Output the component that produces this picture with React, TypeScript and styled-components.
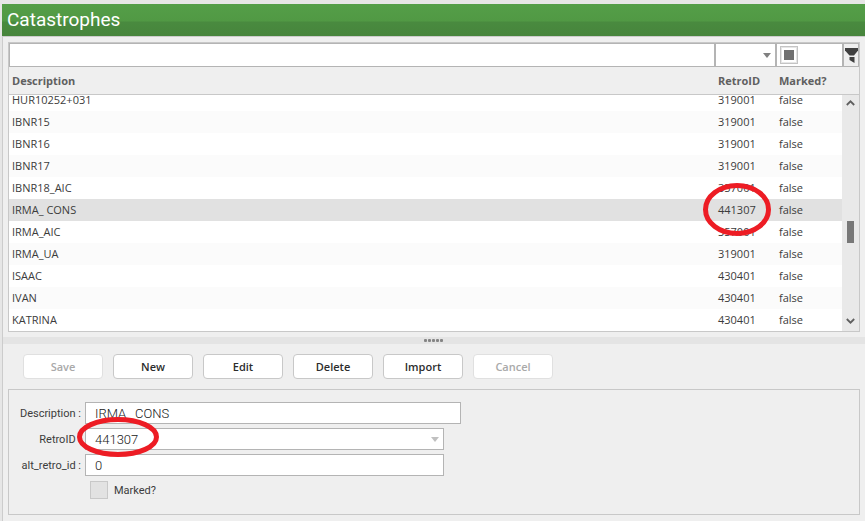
import React from "react";
import styled, { createGlobalStyle } from "styled-components";

const GlobalStyle = createGlobalStyle`
  * { box-sizing: border-box; }
  body { margin: 0; background: #efefef; }
  button, input, select { margin: 0; border-radius: 0; font: inherit; }
`;

const gridFont = `"Open Sans", "Noto Sans", sans-serif`;
const formFont = `Roboto, sans-serif`;

const Page = styled.div`
  display: flex;
  flex-direction: column;
  min-height: 100vh;
  padding: 4px 0 0 2px;
  background: #e6e6e6;
  color: #3c3c3c;
`;

const TitleBar = styled.header`
  display: flex;
  align-items: center;
  height: 32px;
  padding: 0 5px;
  background: linear-gradient(#549e48 0, #519944 17px, #498a3f 18px, #47853c 100%);
`;

const Title = styled.h1`
  margin: 0;
  font: 400 19px/32px ${formFont};
  color: #fff;
`;

const Body = styled.main`
  flex: 1;
  display: flex;
  flex-direction: column;
  border: 1px solid #ccc;
  border-width: 1px 0 0 1px;
  background: #efefef;
`;

const ListPane = styled.section`
  flex: 1;
  display: flex;
  flex-direction: column;
  margin: 5px 5px 5px;
  border: 1px solid #c8c8c8;
`;

const FilterBar = styled.div`
  display: grid;
  grid-template-columns: minmax(0, 1fr) 61px 67px 17px;
  height: 24px;
`;

const FilterCell = styled.div`
  position: relative;
  display: flex;
  align-items: center;
  border: 1px solid #b4b4b4;
  border-left-width: 2px;
  border-right-width: 0;
  background: #fff;

  &:first-child { border-left-width: 1px; }
`;

const FilterInput = styled.input`
  width: 100%;
  height: 100%;
  padding: 0 4px;
  border: 0;
  outline: 0;
  background: transparent;
  font: 11px ${gridFont};
`;

const FilterSelect = styled.select`
  width: 100%;
  height: 100%;
  padding: 0 4px;
  border: 0;
  appearance: none;
  background: transparent;
  font: 11px ${gridFont};
`;

const Caret = styled.svg<{ $right: number }>`
  position: absolute;
  top: calc(50% - 2px);
  right: ${(p) => p.$right}px;
  pointer-events: none;
`;

const TriState = styled.input`
  width: 18px;
  height: 18px;
  margin-left: 3px;
  border: 1px solid #c4c4c4;
  appearance: none;
  background: #fff;

  &:indeterminate {
    background: linear-gradient(#707070, #707070) center / 10px 10px no-repeat #fff;
    box-shadow: inset 0 0 0 1px #e6e6e6;
  }
`;

const FunnelButton = styled.button`
  display: flex;
  align-items: center;
  justify-content: center;
  padding: 0;
  overflow: hidden;
  border: 1px solid #b4b4b4;
  border-left-width: 2px;
  border-right-width: 1px;
  background: #efefef;
`;

const ListArea = styled.div`
  flex: 1;
  display: flex;
  min-height: 264px;
`;

const Table = styled.table`
  flex: 1;
  display: flex;
  flex-direction: column;
  min-width: 0;
  font-family: ${gridFont};
  font-size: 11px;
`;

const Head = styled.thead`
  display: block;
  height: 28px;
  border-bottom: 1px solid #c8c8c8;
`;

const Rows = styled.tbody`
  flex: 1 0 0;
  display: flex;
  flex-direction: column;
  justify-content: flex-end;
  overflow: hidden;
  background: #fff;
`;

const Row = styled.tr<{ $selected?: boolean }>`
  flex: none;
  display: grid;
  grid-template-columns: minmax(0, 1fr) 61px 66px;
  line-height: 22px;
  background: ${(p) => (p.$selected ? "#e1e1e1" : "#fff")};

  &:nth-child(even) { background: ${(p) => (p.$selected ? "#e1e1e1" : "#fbfbfb")}; }
`;

const HeadRow = styled.tr`
  display: grid;
  grid-template-columns: minmax(0, 1fr) 61px 66px;
  line-height: 27px;
`;

const HeadCell = styled.th`
  padding: 0 3px;
  text-align: left;
  font-weight: 700;
  color: #606060;
`;

const Cell = styled.td`
  position: relative;
  padding: 0 3px;
  white-space: nowrap;
`;

const ScrollColumn = styled.div`
  display: flex;
  flex-direction: column;
  width: 17px;
`;

const ScrollHead = styled.div`
  height: 28px;
  border-bottom: 1px solid #c8c8c8;
`;

const ScrollTrack = styled.div`
  flex: 1;
  display: flex;
  flex-direction: column;
  align-items: center;
  padding-bottom: 2px;
  background: #e9e9e9;
`;

const ScrollButton = styled.button`
  display: flex;
  align-items: center;
  justify-content: center;
  width: 17px;
  height: 16px;
  padding: 0;
  border: 0;
  background: transparent;
`;

const ScrollSpace = styled.div<{ $grow: number }>`
  flex: ${(p) => p.$grow} 0 0;
`;

const ScrollThumb = styled.div`
  width: 7px;
  height: 22px;
  background: #787878;
`;

const Splitter = styled.div`
  display: flex;
  align-items: center;
  justify-content: center;
  height: 7px;
  background: #e4e4e4;
`;

const Toolbar = styled.div`
  display: flex;
  gap: 10px;
  padding: 10px 20px;
`;

const ActionButton = styled.button`
  width: 80px;
  height: 25px;
  padding: 0;
  border: 1px solid #c8c8c8;
  border-radius: 4px;
  background: #fff;
  font: 600 11px/22px ${gridFont};
  color: #2c2c2c;

  &:disabled { border-color: #e0e0e0; color: #a9a9a9; }
`;

const Form = styled.form`
  display: flex;
  flex-direction: column;
  gap: 4px;
  margin: 0 5px 6px;
  padding: 12px 0 15px;
  border: 1px solid #c8c8c8;
  font-family: ${formFont};
`;

const Field = styled.div`
  display: grid;
  grid-template-columns: 72px minmax(0, 1fr);
  column-gap: 4px;
  align-items: center;
`;

const Label = styled.label`
  text-align: right;
  white-space: nowrap;
  font-size: 11px;
`;

const Control = styled.div<{ $width: number }>`
  position: relative;
  display: flex;
  width: 100%;
  max-width: ${(p) => p.$width}px;
  height: 22px;
  border: 1px solid #b4b4b4;
  background: #fff;
`;

const TextBox = styled.input`
  width: 100%;
  padding: 0 9px;
  border: 0;
  outline: 0;
  background: transparent;
  font: 300 13px ${formFont};
  color: #202020;
`;

const DropDown = styled.select`
  width: 100%;
  padding: 0 9px;
  border: 0;
  outline: 0;
  appearance: none;
  background: transparent;
  font: 300 13px ${formFont};
  color: #202020;
`;

const CheckLine = styled.label`
  display: flex;
  align-items: center;
  gap: 6px;
  margin: 1px 0 0 81px;
  font-size: 11px;
`;

const CheckBox = styled.input`
  width: 18px;
  height: 18px;
  border: 1px solid #c8c8c8;
  appearance: none;
  background: #e2e2e2;
`;

const RingShape = styled.svg<{ $left: number; $top: number }>`
  position: absolute;
  z-index: 1;
  left: ${(p) => p.$left}px;
  top: ${(p) => p.$top}px;
  pointer-events: none;
`;

type RingProps = { left: number; top: number; width: number; height: number };

const Ring = ({ left, top, width, height }: RingProps) => (
  <RingShape $left={left} $top={top} width={width} height={height} aria-hidden="true">
    <ellipse
      cx={width / 2}
      cy={height / 2}
      rx={width / 2 - 2.5}
      ry={height / 2 - 2.5}
      fill="none"
      stroke="#ed1c24"
      strokeWidth="5"
    />
  </RingShape>
);

const CaretIcon = ({ color, right }: { color: string; right: number }) => (
  <Caret $right={right} width="8" height="5" viewBox="0 0 8 5" aria-hidden="true">
    <path d="M0 0h8L4 5z" fill={color} />
  </Caret>
);

const Chevron = ({ up }: { up?: boolean }) => (
  <svg width="9" height="6" viewBox="0 0 9 6" aria-hidden="true">
    <path d={up ? "M.8 5 4.5 1.3 8.2 5" : "M.8 1 4.5 4.7 8.2 1"} fill="none" stroke="#606060" strokeWidth="1.8" />
  </svg>
);

const rows = [
  ["HUR10252+031", "319001"],
  ["IBNR15", "319001"],
  ["IBNR16", "319001"],
  ["IBNR17", "319001"],
  ["IBNR18_AIC", "357001"],
  ["IRMA_ CONS", "441307"],
  ["IRMA_AIC", "357001"],
  ["IRMA_UA", "319001"],
  ["ISAAC", "430401"],
  ["IVAN", "430401"],
  ["KATRINA", "430401"],
];
const selectedIndex = 5;

const actions = [
  { name: "Save", disabled: true },
  { name: "New", disabled: false },
  { name: "Edit", disabled: false },
  { name: "Delete", disabled: false },
  { name: "Import", disabled: false },
  { name: "Cancel", disabled: true },
];

export default function App() {
  return (
    <Page>
      <GlobalStyle />
      <TitleBar>
        <Title>Catastrophes</Title>
      </TitleBar>
      <Body>
        <ListPane>
          <FilterBar>
            <FilterCell>
              <FilterInput aria-label="Filter by description" />
            </FilterCell>
            <FilterCell>
              <FilterSelect aria-label="Filter by RetroID">
                <option />
              </FilterSelect>
              <CaretIcon color="#808080" right={4} />
            </FilterCell>
            <FilterCell>
              <TriState
                type="checkbox"
                aria-label="Filter by marked"
                ref={(el) => {
                  if (el) el.indeterminate = true;
                }}
              />
            </FilterCell>
            <FunnelButton type="button" aria-label="Apply filter">
              <svg width="13" height="15" viewBox="0 0 13 15" aria-hidden="true">
                <path d="M0 0h13v2.500L9 7.500H4.500L0 2.500z" fill="#404040" />
                <path d="M4.500 9h5v6L4.500 12z" fill="#404040" />
              </svg>
            </FunnelButton>
          </FilterBar>
          <ListArea>
            <Table>
              <Head>
                <HeadRow>
                  <HeadCell scope="col">Description</HeadCell>
                  <HeadCell scope="col">RetroID</HeadCell>
                  <HeadCell scope="col">Marked?</HeadCell>
                </HeadRow>
              </Head>
              <Rows>
                {rows.map(([name, id], i) => (
                  <Row key={name} $selected={i === selectedIndex}>
                    <Cell>{name}</Cell>
                    <Cell>
                      {id}
                      {i === selectedIndex && <Ring left={-12} top={-16} width={68} height={53} />}
                    </Cell>
                    <Cell>false</Cell>
                  </Row>
                ))}
              </Rows>
            </Table>
            <ScrollColumn>
              <ScrollHead />
              <ScrollTrack>
                <ScrollButton type="button" aria-label="Scroll up">
                  <Chevron up />
                </ScrollButton>
                <ScrollSpace $grow={110} />
                <ScrollThumb />
                <ScrollSpace $grow={70} />
                <ScrollButton type="button" aria-label="Scroll down">
                  <Chevron />
                </ScrollButton>
              </ScrollTrack>
            </ScrollColumn>
          </ListArea>
        </ListPane>
        <Splitter role="separator">
          <svg width="20" height="3" viewBox="0 0 20 3" aria-hidden="true">
            {[0, 4, 8, 12, 16].map((x) => (
              <rect key={x} x={x} width="3" height="3" rx="1" fill="#858585" />
            ))}
          </svg>
        </Splitter>
        <Toolbar>
          {actions.map((a) => (
            <ActionButton key={a.name} type="button" disabled={a.disabled}>
              {a.name}
            </ActionButton>
          ))}
        </Toolbar>
        <Form>
          <Field>
            <Label htmlFor="description">Description :</Label>
            <Control $width={376}>
              <TextBox id="description" defaultValue="IRMA_ CONS" />
            </Control>
          </Field>
          <Field>
            <Label htmlFor="retro">RetroID :</Label>
            <Control $width={359}>
              <DropDown id="retro" defaultValue="441307">
                <option>441307</option>
              </DropDown>
              <CaretIcon color="#c0c0c0" right={4} />
              <Ring left={-9} top={-12} width={82} height={40} />
            </Control>
          </Field>
          <Field>
            <Label htmlFor="alt">alt_retro_id :</Label>
            <Control $width={359}>
              <TextBox id="alt" defaultValue="0" />
            </Control>
          </Field>
          <CheckLine>
            <CheckBox type="checkbox" />
            Marked?
          </CheckLine>
        </Form>
      </Body>
    </Page>
  );
}
